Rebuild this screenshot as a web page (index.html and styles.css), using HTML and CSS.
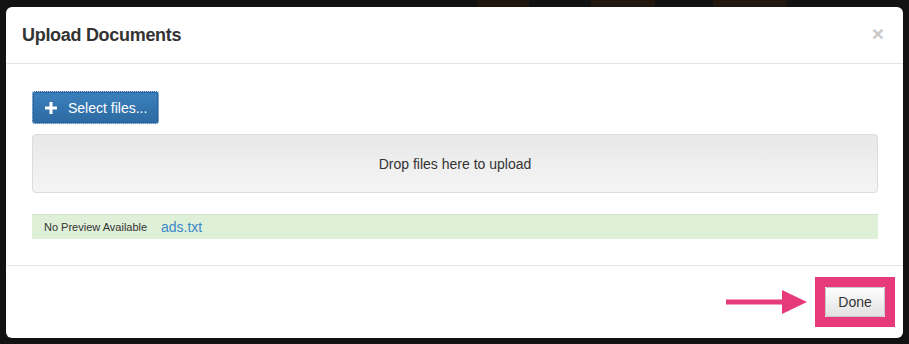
FILE: index.html
```html
<!DOCTYPE html>
<html lang="en">
<head>
    <meta charset="UTF-8">
    <title>Upload Documents</title>
    <link rel="stylesheet" href="styles.css">
</head>
<body>
    <div class="modal">
        <div class="modal-header">
            <h4 class="modal-title">Upload Documents</h4>
            <span class="close">&times;</span>
        </div>
        <div class="modal-body">
            <button class="btn-select">
                <svg class="plus" width="12" height="12" viewBox="0 0 12 12"><rect x="4.5" y="0" width="3" height="12" fill="#fff"/><rect x="0" y="4.5" width="12" height="3" fill="#fff"/></svg>
                <span>Select files...</span>
            </button>
            <div class="dropzone">Drop files here to upload</div>
            <div class="file-row">
                <span class="no-preview">No Preview Available</span>
                <a class="file-name" href="#">ads.txt</a>
            </div>
        </div>
        <div class="modal-footer">
            <svg class="arrow" width="81" height="24" viewBox="0 0 81 24">
                <rect x="0" y="9.5" width="58" height="5" fill="#e63a7a"/>
                <polygon points="56,0 81,12 56,24" fill="#e63a7a"/>
            </svg>
            <div class="highlight">
                <button class="btn-done">Done</button>
            </div>
        </div>
    </div>
</body>
</html>
```

FILE: styles.css
```css
body {
    margin: 0;
    font-family: "Liberation Sans", Arial, sans-serif;
    color: #333;
    background:
        linear-gradient(to right, transparent 478px, #1f1610 478px, #1f1610 529px, transparent 529px, transparent 591px, #22170f 591px, #22170f 655px, transparent 655px, transparent 713px, #22170f 713px, #22170f 787px, transparent 787px) top / 100% 7px no-repeat,
        #121212;
    height: 344px;
    overflow: hidden;
}
.modal {
    margin: 7px 6px 0 6px;
    width: 897px;
    height: 331px;
    background: #fff;
    border-radius: 6px;
    display: flex;
    flex-direction: column;
}
.modal-header {
    height: 56px;
    border-bottom: 1px solid #e5e5e5;
    display: flex;
    align-items: center;
    justify-content: space-between;
    padding: 0 19px 0 16px;
}
.modal-title {
    margin: 0;
    font-size: 18px;
    font-weight: bold;
    letter-spacing: -0.3px;
    color: #333;
}
.close {
    font-size: 21px;
    font-weight: bold;
    color: #c8c8c8;
    line-height: 1;
    margin-top: -4px;
}
.modal-body {
    padding: 27px 25px 26px 26px;
    border-bottom: 1px solid #e5e5e5;
}
.btn-select {
    display: flex;
    align-items: center;
    gap: 11px;
    height: 33px;
    width: 127px;
    padding: 0 0 0 12px;
    border: 1px dotted #b9d2ea;
    border-radius: 3px;
    background: linear-gradient(to bottom, #3b80be, #2c6aa1);
    box-shadow: inset 0 0 0 1px #2b649a;
    color: #fff;
    font-family: "Liberation Sans", Arial, sans-serif;
    font-size: 14px;
}
.dropzone {
    margin-top: 10px;
    height: 57px;
    border: 1px solid #dcdcdc;
    border-radius: 4px;
    background: linear-gradient(to bottom, #e8e8e8, #f5f5f5);
    display: flex;
    align-items: center;
    justify-content: center;
    font-size: 14px;
}
.file-row {
    margin-top: 21px;
    height: 24px;
    border-top: 1px solid #d3e3cb;
    background: #dff0d8;
    display: flex;
    align-items: center;
    padding-left: 12px;
}
.no-preview {
    font-size: 11px;
    width: 117px;
}
.file-name {
    font-size: 14px;
    color: #3a87c8;
    text-decoration: none;
}
.modal-footer {
    flex: 1;
    display: flex;
    align-items: center;
    justify-content: flex-end;
    gap: 8px;
    padding: 0 8px 1px 0;
}
.highlight {
    border: 10px solid #e63a7a;
    display: flex;
}
.btn-done {
    width: 60px;
    height: 30px;
    border: 1px solid #c8c8c8;
    border-radius: 2px;
    background: linear-gradient(to bottom, #fdfdfd, #e2e2e2);
    font-family: "Liberation Sans", Arial, sans-serif;
    font-size: 14px;
    color: #333;
    padding: 0;
}
```
